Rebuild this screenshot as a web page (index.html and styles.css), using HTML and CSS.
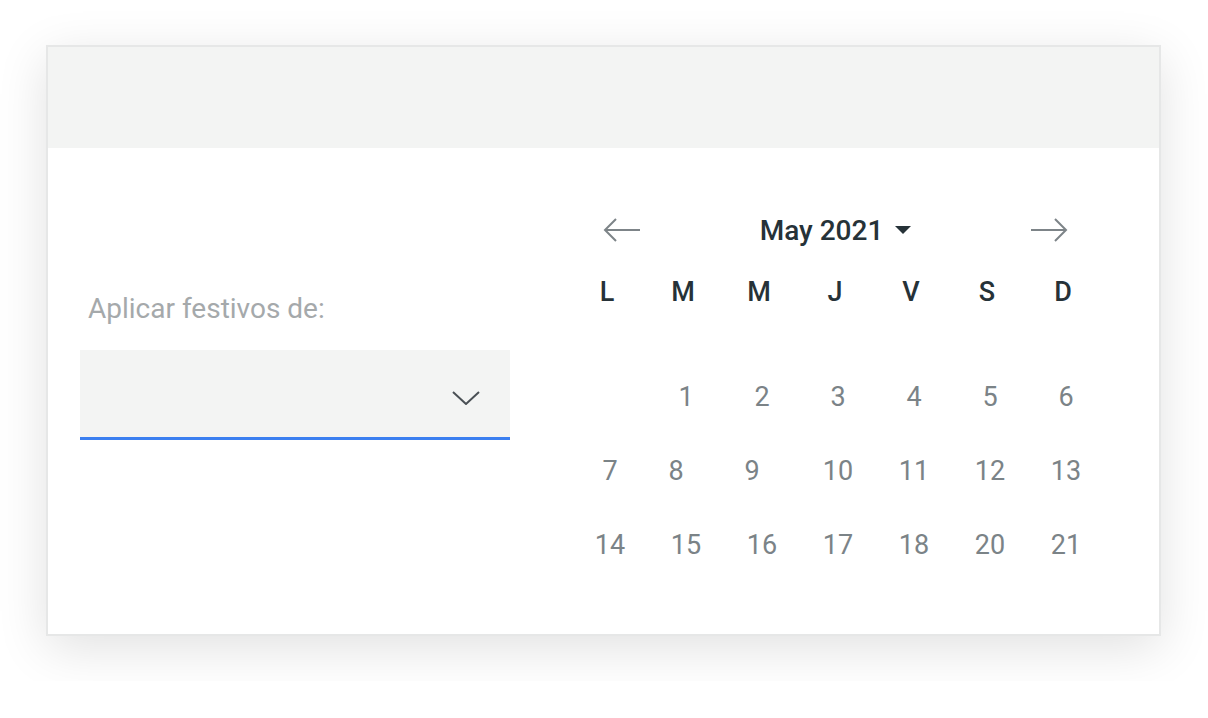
FILE: index.html
```html
<!DOCTYPE html>
<html lang="es">

<head>
    <meta charset="UTF-8">
    <meta name="viewport" content="width=device-width, initial-scale=1.0">
    <title>Festivos</title>
    <link rel="stylesheet" href="styles.css">
</head>

<body>
    <div class="card">
        <div class="card-header"></div>
        <div class="card-body">
            <div class="holidays">
                <label class="holidays-label" for="holidays-select">Aplicar festivos de:</label>
                <div class="select" id="holidays-select">
                    <svg class="select-chevron" width="28" height="14" viewBox="0 0 28 14">
                        <path d="M1 1 L14 13 L27 1" fill="none" stroke="#4a5055" stroke-width="2" />
                    </svg>
                </div>
            </div>

            <div class="calendar">
                <div class="calendar-nav">
                    <svg class="nav-arrow" width="38" height="26" viewBox="0 0 38 26">
                        <path d="M37 13 H2 M13 2 L2 13 L13 24" fill="none" stroke="#7d8488" stroke-width="2" />
                    </svg>
                    <div class="month">
                        <span>May 2021</span>
                        <span class="month-caret"></span>
                    </div>
                    <svg class="nav-arrow" width="38" height="26" viewBox="0 0 38 26">
                        <path d="M1 13 H36 M25 2 L36 13 L25 24" fill="none" stroke="#7d8488" stroke-width="2" />
                    </svg>
                </div>

                <div class="weekdays">
                    <div>L</div>
                    <div>M</div>
                    <div>M</div>
                    <div>J</div>
                    <div>V</div>
                    <div>S</div>
                    <div>D</div>
                </div>

                <div class="days">
                    <div></div>
                    <div>1</div>
                    <div>2</div>
                    <div>3</div>
                    <div>4</div>
                    <div>5</div>
                    <div>6</div>

                    <div>7</div>
                    <div class="day-left">8</div>
                    <div class="day-left">9</div>
                    <div>10</div>
                    <div>11</div>
                    <div>12</div>
                    <div>13</div>

                    <div>14</div>
                    <div>15</div>
                    <div>16</div>
                    <div>17</div>
                    <div>18</div>
                    <div>20</div>
                    <div>21</div>
                </div>
            </div>
        </div>
    </div>
</body>

</html>
```

FILE: styles.css
```css
body {
    margin: 0;
    padding: 45px 46px;
    background: #ffffff;
    font-family: Roboto, "Liberation Sans", sans-serif;
}

.card {
    width: 1115px;
    height: 591px;
    box-sizing: border-box;
    border: 2px solid #e6e7e7;
    background: #ffffff;
    box-shadow: 0 12px 48px rgba(0, 0, 0, 0.12);
}

.card-header {
    height: 101px;
    background-color: #f3f4f3;
}

.card-body {
    display: flex;
    padding: 0 0 0 32px;
}

.holidays {
    width: 430px;
    padding-top: 146px;
}

.holidays-label {
    display: block;
    padding-left: 8px;
    font-size: 28px;
    line-height: 30px;
    color: #a5a9ab;
    margin-bottom: 26px;
}

.select {
    height: 87px;
    background-color: #f3f4f3;
    border-bottom: 3px solid #3b7ff0;
    display: flex;
    align-items: center;
    justify-content: flex-end;
    padding-right: 30px;
}

.select-chevron {
    margin-top: 8px;
}

.calendar {
    margin-left: 59px;
    width: 532px;
    padding-top: 62px;
}

.calendar-nav {
    display: flex;
    align-items: center;
    justify-content: space-between;
    height: 40px;
    padding: 0 33px 0 34px;
}

.month {
    display: flex;
    align-items: center;
    gap: 12px;
    font-size: 28px;
    font-weight: 500;
    color: #263238;
}

.month-caret {
    width: 0;
    height: 0;
    border-left: 8px solid transparent;
    border-right: 8px solid transparent;
    border-top: 8px solid #263238;
}

.weekdays,
.days {
    display: grid;
    grid-template-columns: repeat(7, 76px);
}

.weekdays {
    margin-top: 22px;
    height: 40px;
    line-height: 40px;
    text-align: center;
    font-size: 27px;
    font-weight: 500;
    color: #263238;
}

.days {
    margin-top: 48px;
    padding-left: 3px;
    grid-auto-rows: 74px;
    line-height: 74px;
    text-align: center;
    font-size: 27px;
    color: #7b8387;
}

.day-left {
    padding-right: 20px;
}
```
